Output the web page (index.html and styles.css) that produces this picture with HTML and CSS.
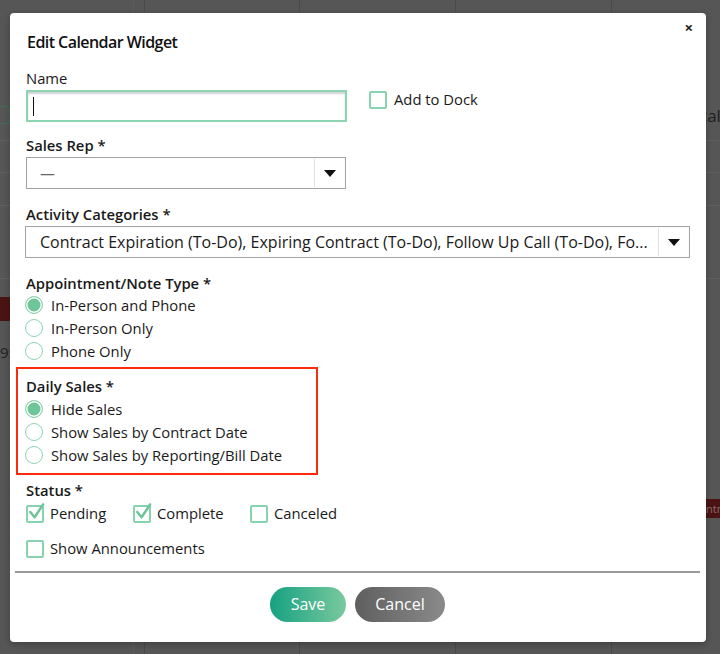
FILE: index.html
```html
<!DOCTYPE html>
<html>
<head>
<meta charset="utf-8">
<link rel="stylesheet" href="styles.css">
</head>
<body>
<div class="page">
  <div class="bg-grid">
    <span class="vline l1"></span><span class="vline l2"></span><span class="vline l3"></span><span class="vline l4"></span><span class="vline l5"></span>
    <span class="hline h1"></span><span class="hline h2"></span><span class="hline h3"></span><span class="hline h4"></span>
    <span class="bg-btn"></span>
    <span class="bg-red left-red"></span>
    <span class="bg-text t-left">9:</span>
    <span class="bg-text t-right">cal</span>
    <span class="bg-red right-red">ntr</span>
  </div>

  <div class="modal">
    <button class="close" aria-label="Close">×</button>
    <h1 class="title">Edit Calendar Widget</h1>

    <div class="field first">
      <label class="label plain">Name</label>
      <div class="name-row">
        <div class="text-input"><span class="caret"></span></div>
        <label class="check dock"><span class="box"></span><span>Add to Dock</span></label>
      </div>
    </div>

    <div class="field rep">
      <label class="label">Sales Rep *</label>
      <div class="select small">
        <span class="value dash">—</span>
        <span class="arrow-cell"><span class="arrow"></span></span>
      </div>
    </div>

    <div class="field cats">
      <label class="label">Activity Categories *</label>
      <div class="select wide">
        <span class="value big">Contract Expiration (To-Do), Expiring Contract (To-Do), Follow Up Call (To-Do), Fo...</span>
        <span class="arrow-cell"><span class="arrow"></span></span>
      </div>
    </div>

    <div class="field appt">
      <label class="label flush">Appointment/Note Type *</label>
      <div class="radio-list">
        <label class="radio on"><span class="dot"></span><span>In-Person and Phone</span></label>
        <label class="radio"><span class="dot"></span><span>In-Person Only</span></label>
        <label class="radio"><span class="dot"></span><span>Phone Only</span></label>
      </div>
    </div>

    <div class="highlight">
      <label class="label tight">Daily Sales *</label>
      <div class="radio-list">
        <label class="radio on"><span class="dot"></span><span>Hide Sales</span></label>
        <label class="radio"><span class="dot"></span><span>Show Sales by Contract Date</span></label>
        <label class="radio"><span class="dot"></span><span>Show Sales by Reporting/Bill Date</span></label>
      </div>
    </div>

    <div class="status">
      <label class="label">Status *</label>
      <div class="check-row">
        <label class="check w-pending"><span class="box"><svg viewBox="0 0 20 20" class="tick"><path d="M3.5 9.5 L8 15 L17 1.5" /></svg></span><span>Pending</span></label>
        <label class="check w-complete"><span class="box"><svg viewBox="0 0 20 20" class="tick"><path d="M3.5 9.5 L8 15 L17 1.5" /></svg></span><span>Complete</span></label>
        <label class="check"><span class="box"></span><span>Canceled</span></label>
      </div>
      <label class="check announce"><span class="box"></span><span>Show Announcements</span></label>
    </div>

    <div class="footer">
      <button class="btn save">Save</button>
      <button class="btn cancel">Cancel</button>
    </div>
  </div>
</div>
</body>
</html>
```

FILE: styles.css
```css
* { box-sizing: border-box; }
html, body { margin: 0; padding: 0; }
body {
  width: 720px;
  height: 654px;
  overflow: hidden;
  background: #565656;
  font-family: "Open Sans", "Noto Sans", "DejaVu Sans", sans-serif;
  color: #1a1a1a;
}
.page { position: relative; width: 720px; height: 654px; overflow: hidden; }

/* dimmed page behind the dialog */
.bg-grid { position: absolute; inset: 0; }
.vline { position: absolute; top: 0; bottom: 0; width: 1px; background: #4a4a4a; }
.l1 { left: 144px; } .l2 { left: 299px; } .l3 { left: 455px; } .l4 { left: 611px; } .l5 { left: 133px; background: #5c5c5c; }
.hline { position: absolute; left: 0; right: 0; height: 1px; background: #606060; }
.h1 { top: 140px; } .h2 { top: 172px; } .h3 { top: 205px; } .h4 { top: 278px; }
.bg-btn { position: absolute; left: -4px; top: 106px; width: 14px; height: 18px; border: 1px solid #3e6f55; border-radius: 2px; }
.bg-red { position: absolute; background: #4b1414; }
.left-red { left: 0; top: 297px; width: 12px; height: 24px; }
.right-red { left: 704px; top: 499px; width: 16px; height: 19px; color: #8b6a6a; font-size: 11px; line-height: 19px; padding-left: 2px; overflow: hidden; }
.bg-text { position: absolute; color: #202020; font-size: 15px; }
.t-left { left: 0; top: 342px; }
.t-right { left: 699px; top: 104px; font-size: 17px; }

/* dialog */
.modal {
  position: absolute;
  left: 10px;
  top: 13px;
  width: 696px;
  height: 629px;
  background: #fff;
  border-radius: 4px;
  padding: 18px 16px 0 16px;
  box-shadow: 0 2px 6px rgba(0,0,0,0.25);
}
.close {
  position: absolute;
  top: 5px;
  right: 13px;
  border: 0;
  background: none;
  font-family: "Open Sans", sans-serif;
  font-size: 15px;
  font-weight: 700;
  color: #222;
  padding: 0;
  line-height: 18px;
  cursor: pointer;
}
.title {
  margin: 0 0 0 1px;
  font-size: 16px;
  font-weight: 600;
  line-height: 22px;
  letter-spacing: -0.55px;
  color: #111;
}

.field { display: flex; flex-direction: column; margin-top: 14px; }
.field.first { margin-top: 15px; }
.field.rep { margin-top: 13px; }
.field.cats { margin-top: 15px; }
.field.appt { margin-top: 15px; }
.label {
  display: block;
  font-size: 14.8px;
  font-weight: 600;
  line-height: 20px;
  margin-bottom: 2px;
  color: #1a1a1a;
}
.label.plain { font-weight: 400; }
.label.tight { margin-bottom: 1px; }
.label.flush { margin-bottom: 0; }

.name-row { display: flex; align-items: flex-start; gap: 22px; }
.text-input {
  width: 321px;
  height: 32px;
  border: 2px solid #8dd4b2;
  box-shadow: inset 0 2px 2px rgba(0,0,0,0.18);
  position: relative;
  background: #fff;
}
.caret { position: absolute; left: 5px; top: 5px; width: 1px; height: 19px; background: #111; }

.check { display: inline-flex; align-items: center; gap: 6px; font-size: 14.8px; line-height: 23px; height: 23px; color: #1a1a1a; }
.check .box {
  width: 18px;
  height: 18px;
  border: 2px solid #86d3ad;
  border-radius: 2px;
  position: relative;
  flex: none;
}
.dock { margin-top: -2px; gap: 7px; }
.tick { position: absolute; left: -1px; top: -4px; width: 19px; height: 19px; overflow: visible; }
.tick path { fill: none; stroke: #6cc497; stroke-width: 2.6; stroke-linecap: round; stroke-linejoin: round; }

.select {
  display: flex;
  align-items: center;
  height: 32px;
  border: 1px solid #a3a3a3;
  box-shadow: inset 0 0 1px rgba(0,0,0,0.15);
  background: #fff;
}
.select.small { width: 320px; }
.select.wide { width: 665px; margin-left: -1px; }
.select .value { flex: 1; padding-left: 14px; font-size: 14.8px; white-space: nowrap; overflow: hidden; color: #1a1a1a; }
.select .value.big { font-size: 16px; }
.select .value.dash { color: #666; padding-left: 13px; }
.arrow-cell {
  width: 31px;
  height: 28px;
  border-left: 1px solid #e2e2e2;
  display: flex;
  align-items: center;
  justify-content: center;
}
.arrow { width: 0; height: 0; border-left: 6px solid transparent; border-right: 6px solid transparent; border-top: 7px solid #111; margin-top: 1px; }

.radio-list { display: flex; flex-direction: column; }
.radio { display: flex; align-items: center; gap: 8px; height: 23px; font-size: 14.8px; color: #1a1a1a; margin-left: -1px; }
.radio .dot {
  width: 18px;
  height: 18px;
  border-radius: 50%;
  border: 1.5px solid #8dd4b2;
  flex: none;
  background: #fff;
}
.radio.on .dot { background: #6ec598; box-shadow: inset 0 0 0 1.5px #fff; border-color: #8dd4b2; }

.highlight {
  margin: 5px 0 0 -10px;
  width: 302px;
  border: 2px solid #ff2a0c;
  padding: 7px 8px 7px 8px;
}

.status { margin-top: 5px; display: flex; flex-direction: column; }
.check-row { display: flex; }
.w-pending { width: 107px; }
.w-complete { width: 117px; }
.announce { margin-top: 12px; align-self: flex-start; }

.footer {
  margin-top: 11px;
  margin-left: -11px;
  margin-right: -10px;
  border-top: 2px solid #9a9a9a;
  display: flex;
  justify-content: center;
  gap: 9px;
  padding-top: 14px;
}
.btn {
  height: 35px;
  border: 0;
  border-radius: 18px;
  color: #fff;
  font-family: "Open Sans", sans-serif;
  font-size: 16px;
  line-height: 35px;
  padding: 0;
  cursor: pointer;
}
.save { width: 76px; background: linear-gradient(90deg, #16a182 0%, #79c99d 100%); }
.cancel { width: 90px; background: linear-gradient(90deg, #5f5f5f 0%, #8a8a8a 100%); }
```
